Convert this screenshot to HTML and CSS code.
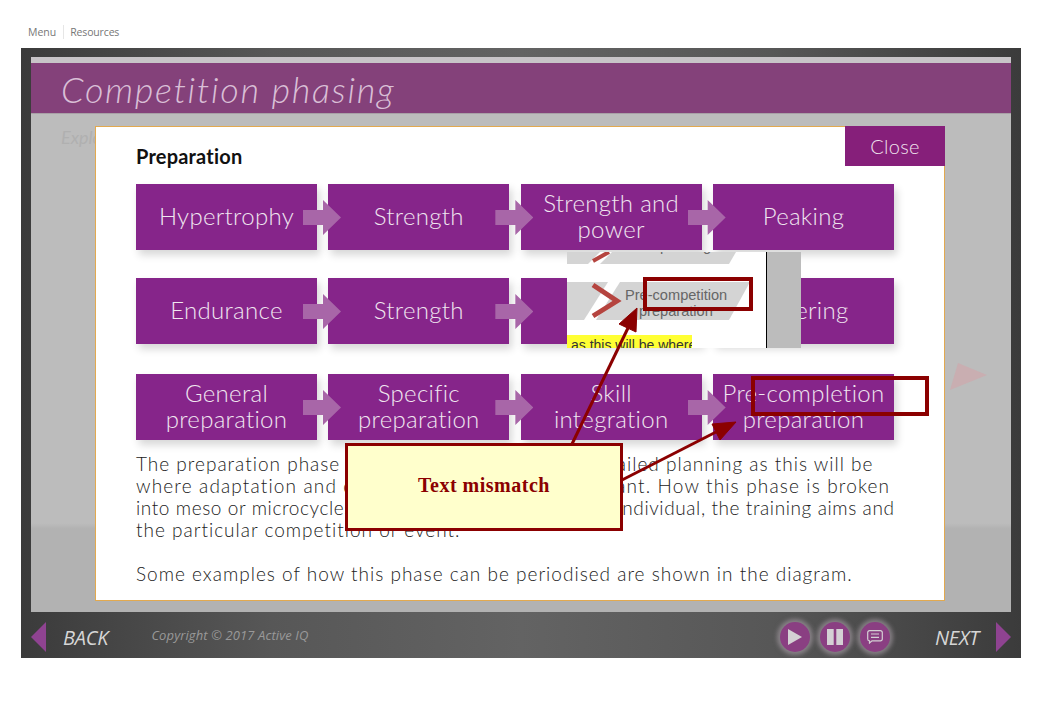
FILE: index.html
```html
<!DOCTYPE html>
<html lang="en">
<head>
    <meta charset="UTF-8">
    <title>Competition phasing</title>
    <link rel="stylesheet" href="styles.css">
</head>
<body>
<nav class="topnav">
    <a class="nav-link">Menu</a>
    <a class="nav-link">Resources</a>
</nav>

<div class="frame">
    <div class="slide">
        <h1 class="slide-title">Competition phasing</h1>
        <p class="slide-intro">Explore</p>
        <svg class="ghost-arrow" width="40" height="30" viewBox="0 0 40 30"><polygon points="8,0 37,12 0,27" fill="#c9aeb1"/></svg>

        <div class="modal">
            <div class="close-btn">Close</div>
            <h2 class="modal-title">Preparation</h2>
            <div class="phase-grid">
                <div class="box arrow">Hypertrophy</div>
                <div class="box arrow">Strength</div>
                <div class="box arrow">Strength and<br>power</div>
                <div class="box">Peaking</div>

                <div class="box arrow">Endurance</div>
                <div class="box arrow">Strength</div>
                <div class="box arrow">Power</div>
                <div class="box">Tapering</div>

                <div class="box arrow">General<br>preparation</div>
                <div class="box arrow">Specific<br>preparation</div>
                <div class="box arrow">Skill<br>integration</div>
                <div class="box">Pre-completion<br>preparation</div>
            </div>
            <p class="modal-text">
                <span class="line">The preparation phase of a training plan requires detailed planning as this will be</span>
                <span class="line wide">where adaptation and development are most important. How this phase is broken</span>
                <span class="line tight">into meso or microcycles will depend on the sport, the individual, the training aims and</span>
                <span class="line">the particular competition or event.</span>
            </p>
            <p class="modal-text">
                <span class="line">Some examples of how this phase can be periodised are shown in the diagram.</span>
            </p>
        </div>
    </div>

    <div class="controls">
        <div class="back">
            <svg width="15" height="30" viewBox="0 0 15 30"><polygon points="15,0 15,30 0,15" fill="#8f4391"/></svg>
            <span class="nav-word">BACK</span>
        </div>
        <span class="copyright">Copyright © 2017 Active IQ</span>
        <div class="round-btns">
            <div class="round-btn">
                <svg width="14" height="16" viewBox="0 0 14 16"><polygon points="0,0 14,8 0,16" fill="#d4d0d4"/></svg>
            </div>
            <div class="round-btn">
                <svg width="16" height="16" viewBox="0 0 16 16"><rect x="0" width="6.7" height="16" fill="#d4d0d4"/><rect x="9.3" width="6.7" height="16" fill="#d4d0d4"/></svg>
            </div>
            <div class="round-btn">
                <svg width="16" height="14" viewBox="0 0 16 14"><path d="M2.5 .7H13.5A1.8 1.8 0 0 1 15.3 2.5V9A1.8 1.8 0 0 1 13.5 10.8H5L2.5 13V10.8A1.8 1.8 0 0 1 .7 9V2.5A1.8 1.8 0 0 1 2.5 .7ZM4 4H12M4 7.3H12" fill="none" stroke="#d4d0d4" stroke-width="1.2"/></svg>
            </div>
        </div>
        <div class="next">
            <span class="nav-word">NEXT</span>
            <svg width="15" height="30" viewBox="0 0 15 30"><polygon points="0,0 15,15 0,30" fill="#8f4391"/></svg>
        </div>
    </div>
</div>

<!-- review annotation on top of the page -->
<div class="crop">
    <div class="crop-side"></div>
    <svg class="crop-shapes" width="234" height="96" viewBox="0 0 234 96">
        <polygon points="0,0 33,0 21,12 0,12" fill="#d4d4d4"/>
        <polygon points="45,0 169,0 162,12 33,12" fill="#d4d4d4"/>
        <polyline points="26,9 42,0" fill="none" stroke="#b5443f" stroke-width="4"/>
        <polygon points="0,30 41,30 17,68 0,68" fill="#d4d4d4"/>
        <polygon points="53,30 183,30 162,68 29,68" fill="#d4d4d4"/>
        <polyline points="26,33 50,49 26,64" fill="none" stroke="#b5443f" stroke-width="5"/>
    </svg>
    <span class="crop-text crop-line0">peaking</span>
    <span class="crop-text crop-line1">Pre-competition</span>
    <span class="crop-text crop-line2">preparation</span>
    <span class="crop-mark">as this will be where</span>
</div>
<div class="mark mark-one"></div>
<div class="mark mark-two"></div>
<svg class="pointers" width="1061" height="706" viewBox="0 0 1061 706">
    <g fill="#8b0000" stroke="#8b0000">
        <line x1="572" y1="444" x2="628" y2="328" stroke-width="3"/>
        <polygon points="637,308 636,332 619,324"/>
        <line x1="622" y1="480" x2="716" y2="432" stroke-width="3"/>
        <polygon points="736,422 720,440 712,424"/>
    </g>
</svg>
<div class="callout">Text mismatch</div>
</body>
</html>
```

FILE: styles.css
```css
html, body {
    margin: 0;
    padding: 0;
    height: 706px;
    overflow: hidden;
    background-color: #fff;
}

body {
    position: relative;
    font-family: "Lato", Arial, sans-serif;
}

.topnav {
    display: flex;
    align-items: center;
    height: 48px;
    padding: 16px 0 0 28px;
    box-sizing: border-box;
}

.nav-link {
    font-family: "Open Sans", Arial, sans-serif;
    font-size: 10.5px;
    color: #777;
}

.nav-link + .nav-link {
    margin-left: 7px;
    padding-left: 6px;
    border-left: 1px solid #e6e6e6;
    letter-spacing: -.15px;
}

.frame {
    width: 1000px;
    height: 610px;
    margin-left: 21px;
    padding: 9px 10px 0;
    box-sizing: border-box;
    background: linear-gradient(to right, #3b3b3b, #575757 25%, #636363 50%, #575757 75%, #3b3b3b);
}

.slide {
    position: relative;
    height: 555px;
    padding-top: 6px;
    box-sizing: border-box;
    background: linear-gradient(to bottom, #bcbcbc 84%, #b2b2b2 85%);
    box-shadow: inset 0 6px 0 #c8c4c8;
}

.slide-title {
    height: 51px;
    margin: 0;
    padding-left: 30px;
    background-color: #84417a;
    border-bottom: 1px solid #a8a0a6;
    box-sizing: border-box;
    font-size: 36px;
    font-weight: 300;
    font-style: italic;
    line-height: 52px;
    letter-spacing: 1.7px;
    color: #d9bfd6;
}

.slide-intro {
    margin: 12px 0 0 30px;
    font-size: 18px;
    font-style: italic;
    color: #b0b0b0;
}

.ghost-arrow {
    position: absolute;
    left: 919px;
    top: 306px;
}

.modal {
    position: absolute;
    z-index: 1;
    left: 64px;
    top: 69px;
    width: 850px;
    height: 475px;
    padding: 19px 0 0 40px;
    box-sizing: border-box;
    background-color: #fff;
    border: 1px solid #e2a94f;
}

.close-btn {
    position: absolute;
    right: -1px;
    top: -1px;
    width: 100px;
    height: 40px;
    background-color: #861f7a;
    color: #f0e4ee;
    font-size: 20px;
    font-weight: 300;
    line-height: 40px;
    text-align: center;
    letter-spacing: .3px;
}

.modal-title {
    margin: 0 0 18px;
    font-size: 20px;
    font-weight: 700;
    line-height: 20px;
    letter-spacing: .2px;
    color: #111;
}

.phase-grid {
    display: grid;
    grid-template-columns: repeat(4, 181px);
    grid-template-rows: 66px 68px 66px;
    column-gap: 11.33px;
    row-gap: 28px;
}

.box {
    position: relative;
    display: flex;
    align-items: center;
    justify-content: center;
    height: 66px;
    padding-bottom: 3px;
    box-sizing: border-box;
    text-align: center;
    background-color: #86258a;
    color: #f0e6f0;
    font-size: 24px;
    font-weight: 300;
    line-height: 26px;
    letter-spacing: .3px;
    box-shadow: 3px 5px 8px rgba(0, 0, 0, .16);
}

.box.arrow::after {
    content: "";
    position: absolute;
    z-index: 1;
    right: -24px;
    top: 16px;
    width: 38px;
    height: 35px;
    background-color: #a866a8;
    clip-path: polygon(0 10px, 20px 10px, 20px 0, 100% 50%, 20px 100%, 20px 25px, 0 25px);
}

.modal-text {
    margin: 13px 0 22px;
    font-size: 19px;
    font-weight: 300;
    line-height: 22px;
    letter-spacing: 1px;
    color: #222;
    white-space: nowrap;
}

.line {
    display: block;
}

.line.wide {
    letter-spacing: 1.15px;
}

.line.tight {
    letter-spacing: .6px;
}

.controls {
    display: flex;
    align-items: center;
    height: 46px;
    padding-top: 4px;
    box-sizing: border-box;
}

.back, .next {
    display: flex;
    align-items: center;
}

.nav-word {
    font-family: "Open Sans", Arial, sans-serif;
    font-size: 20px;
    font-style: italic;
    color: #d6d6d6;
    letter-spacing: -.2px;
}

.back .nav-word {
    margin-left: 17px;
}

.next .nav-word {
    margin-right: 17px;
}

.copyright {
    margin: 0 0 4px 43px;
    font-family: "Open Sans", Arial, sans-serif;
    font-size: 13px;
    font-style: italic;
    letter-spacing: .1px;
    color: #999;
}

.round-btns {
    display: flex;
    gap: 10px;
    margin-left: auto;
    margin-right: 45px;
}

.round-btn {
    display: flex;
    align-items: center;
    justify-content: center;
    width: 30px;
    height: 30px;
    border-radius: 50%;
    background-color: #8a3f82;
    box-shadow: 0 0 4px 3px rgba(170, 160, 168, .6);
}

.crop {
    position: absolute;
    z-index: 2;
    left: 567px;
    top: 252px;
    width: 234px;
    height: 96px;
    overflow: hidden;
    background-color: #fff;
}

.crop-side {
    position: absolute;
    right: 0;
    top: 0;
    width: 34px;
    height: 96px;
    background-color: #bcbcbc;
    border-left: 1px solid #000;
}

.crop-shapes {
    position: absolute;
    left: 0;
    top: 0;
}

.crop-text {
    position: absolute;
    font-family: "Liberation Sans", Arial, sans-serif;
    font-size: 14.6px;
    line-height: 16px;
    color: #666;
}

.crop-line0 {
    left: 93px;
    top: -14px;
}

.crop-line1 {
    left: 58px;
    top: 35px;
}

.crop-line2 {
    left: 72px;
    top: 51px;
}

.crop-mark {
    position: absolute;
    left: 0;
    top: 83px;
    width: 125px;
    height: 13px;
    padding-left: 4px;
    box-sizing: border-box;
    overflow: hidden;
    background-color: #ffff33;
    font-family: "Liberation Sans", Arial, sans-serif;
    font-size: 14px;
    line-height: 20px;
    color: #333;
    white-space: nowrap;
}

.mark {
    position: absolute;
    z-index: 3;
    box-sizing: border-box;
    border: 4px solid #8b0000;
}

.mark-one {
    left: 643px;
    top: 277px;
    width: 110px;
    height: 34px;
}

.mark-two {
    left: 751px;
    top: 376px;
    width: 178px;
    height: 40px;
}

.pointers {
    position: absolute;
    z-index: 3;
    left: 0;
    top: 0;
}

.callout {
    position: absolute;
    z-index: 4;
    left: 345px;
    top: 443px;
    width: 278px;
    height: 88px;
    padding-bottom: 4px;
    box-sizing: border-box;
    display: flex;
    align-items: center;
    justify-content: center;
    background-color: #ffffcc;
    border: 3px solid #8b0000;
    font-family: "Liberation Serif", "Times New Roman", serif;
    font-size: 20px;
    font-weight: 700;
    letter-spacing: .5px;
    color: #8b0000;
}
```
